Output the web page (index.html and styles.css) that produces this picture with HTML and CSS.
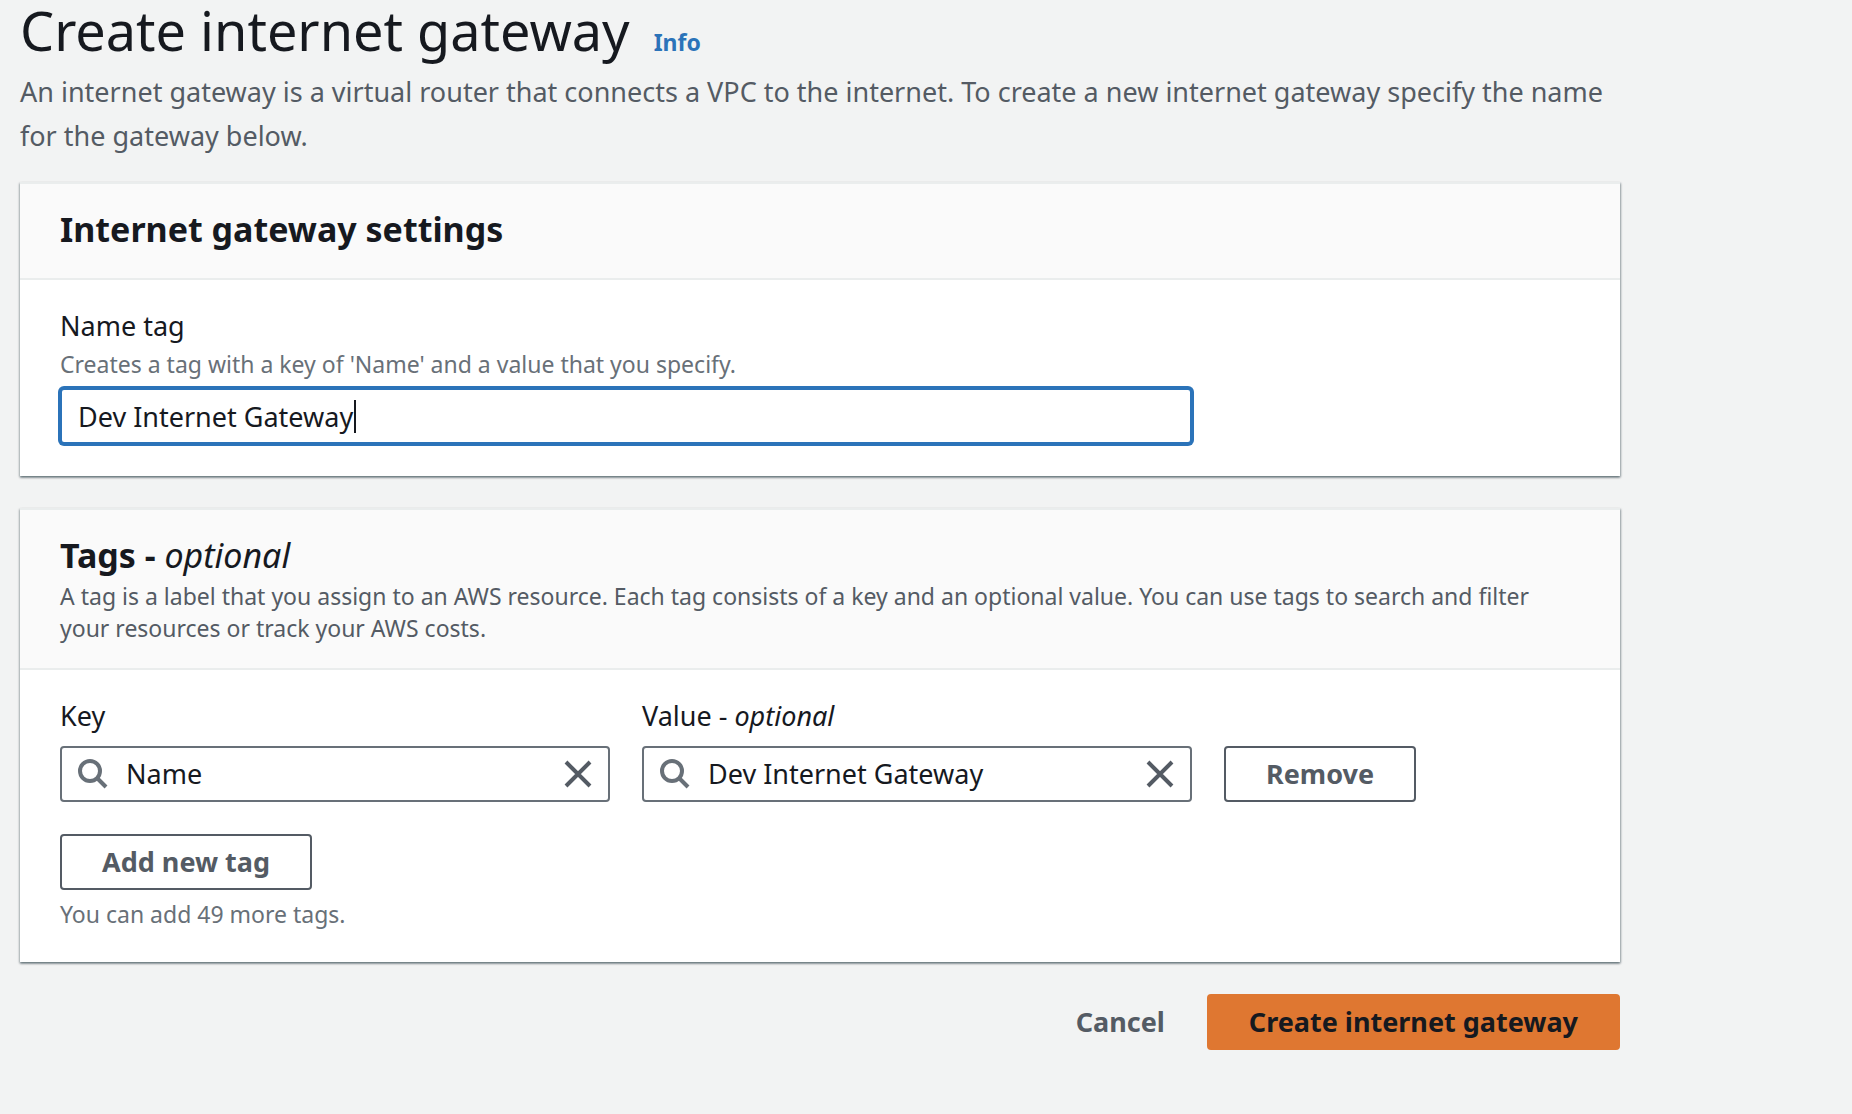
FILE: index.html
```html
<!DOCTYPE html>
<html lang="en">
<head>
<meta charset="utf-8">
<meta name="viewport" content="width=device-width, initial-scale=1">
<title>Create internet gateway</title>
<link rel="stylesheet" href="styles.css">
</head>
<body>
<svg class="sprite" aria-hidden="true">
  <symbol id="icon-search" viewBox="0 0 32 32">
    <circle cx="12" cy="13" r="10"/>
    <path d="M19 20 L28 29"/>
  </symbol>
  <symbol id="icon-close" viewBox="0 0 32 32">
    <path d="M4 4 L28 28 M28 4 L4 28"/>
  </symbol>
</svg>
<main class="page">
  <header class="page-header">
    <div class="title-row">
      <h1 class="title">Create internet gateway</h1>
      <a class="info-link" href="#info">Info</a>
    </div>
    <p class="intro">An internet gateway is a virtual router that connects a VPC to the internet. To create a new internet gateway specify the name for the gateway below.</p>
  </header>

  <form class="form">
    <section class="card">
      <div class="card-header">
        <h2 class="card-title">Internet gateway settings</h2>
      </div>
      <div class="card-body">
        <label class="label" for="name-tag">Name tag</label>
        <p class="hint" id="name-hint">Creates a tag with a key of 'Name' and a value that you specify.</p>
        <div class="input-wrap">
          <input class="input" id="name-tag" type="text" value="Dev Internet Gateway" aria-describedby="name-hint" autofocus>
          <span class="caret" aria-hidden="true"></span>
        </div>
      </div>
    </section>

    <section class="card">
      <div class="card-header">
        <h2 class="card-title">Tags - <em class="optional">optional</em></h2>
        <p class="card-description">A tag is a label that you assign to an AWS resource. Each tag consists of a key and an optional value. You can use tags to search and filter your resources or track your AWS costs.</p>
      </div>
      <div class="card-body">
        <div class="tag-row">
          <div class="field">
            <label class="label" for="tag-key">Key</label>
            <div class="search-box">
              <svg class="icon icon-search" aria-hidden="true"><use href="#icon-search"/></svg>
              <input class="search-input" id="tag-key" type="text" value="Name">
              <button class="clear" type="button" aria-label="Clear key"><svg class="icon icon-close"><use href="#icon-close"/></svg></button>
            </div>
          </div>
          <div class="field">
            <label class="label" for="tag-value">Value - <em class="optional">optional</em></label>
            <div class="search-box">
              <svg class="icon icon-search" aria-hidden="true"><use href="#icon-search"/></svg>
              <input class="search-input" id="tag-value" type="text" value="Dev Internet Gateway">
              <button class="clear" type="button" aria-label="Clear value"><svg class="icon icon-close"><use href="#icon-close"/></svg></button>
            </div>
          </div>
          <button class="button" type="button">Remove</button>
        </div>
        <button class="button button-add" type="button">Add new tag</button>
        <p class="hint">You can add 49 more tags.</p>
      </div>
    </section>

    <div class="actions">
      <button class="button button-link" type="button">Cancel</button>
      <button class="button button-primary" type="submit">Create internet gateway</button>
    </div>
  </form>
</main>
</body>
</html>
```
FILE: styles.css
```css
* {
  box-sizing: border-box;
}

body {
  margin: 0;
  background: #f2f3f3;
  color: #16191f;
  font-family: "Noto Sans", "Open Sans", sans-serif;
  font-size: 27px;
  font-weight: 430;
  line-height: 44px;
}

h1, h2, p {
  margin: 0;
}

input, button {
  font: inherit;
  color: inherit;
}

.sprite {
  display: none;
}

.page {
  max-width: 1640px;
  padding: 0 20px 64px;
}

.title-row {
  display: flex;
  align-items: baseline;
  gap: 24px;
}

.title {
  font-size: 54px;
  font-weight: 430;
  line-height: 60px;
}

.info-link {
  color: #2b73b9;
  font-size: 23px;
  font-weight: 700;
  line-height: 24px;
  text-decoration: none;
}

.intro {
  color: #545b64;
  padding: 10px 0 24px;
}

.form {
  display: flex;
  flex-direction: column;
  gap: 32px;
}

.card {
  background: #fff;
  border-top: 2px solid #eaeded;
  box-shadow: 0 2px 2px rgba(0, 28, 36, 0.3), 1px 1px 2px rgba(0, 28, 36, 0.3), -1px 1px 2px rgba(0, 28, 36, 0.2);
}

.card-header {
  padding: 20px 40px 24px;
  background: #fafafa;
  border-bottom: 2px solid #eaeded;
}

.card-title {
  font-size: 34px;
  font-weight: 700;
  line-height: 50px;
}

.optional {
  font-style: italic;
  font-weight: 430;
}

.card-description {
  color: #545b64;
  font-size: 23px;
  line-height: 32px;
}

.card-body {
  padding: 24px 40px 32px;
}

.label {
  display: block;
}

.hint {
  color: #687078;
  font-size: 23px;
  line-height: 32px;
}

.input,
.search-box {
  height: 56px;
  border: 2px solid #687078;
  border-radius: 4px;
  background: #fff;
}

.input-wrap {
  position: relative;
  max-width: 1132px;
  margin-top: 8px;
}

.input {
  display: block;
  width: 100%;
  padding: 0 16px;
  outline: none;
  caret-color: transparent;
}

.input:focus {
  border-color: #2b73b9;
  box-shadow: 0 0 0 2px #2b73b9;
}

.caret {
  position: absolute;
  top: 12px;
  left: 294px;
  width: 2px;
  height: 33px;
  background: #16191f;
}

.tag-row {
  display: grid;
  grid-template-columns: minmax(0, 550px) minmax(0, 550px) auto;
  justify-content: start;
  align-items: end;
  gap: 32px;
}

.field .label {
  margin-bottom: 8px;
}

.search-box {
  display: flex;
  align-items: center;
  padding: 0 14px 0 16px;
}

.search-input {
  flex: 1;
  min-width: 0;
  padding: 0 0 0 16px;
  border: 0;
  background: none;
  outline: none;
}

.icon {
  display: block;
  width: 32px;
  height: 32px;
  fill: none;
  stroke-width: 4;
}

.icon-search {
  stroke: #687078;
}

.icon-close {
  stroke: #545b64;
}

.clear {
  padding: 0;
  border: 0;
  background: none;
}

.button {
  height: 56px;
  padding: 0 40px;
  border: 2px solid #545b64;
  border-radius: 4px;
  background: #fff;
  color: #545b64;
  font-weight: 700;
  line-height: 44px;
}

.button-add {
  display: block;
  margin: 32px 0 8px;
}

.actions {
  display: flex;
  justify-content: flex-end;
}

.button-link {
  border-color: transparent;
  background: none;
}

.button-primary {
  border-color: #df7731;
  background: #df7731;
  color: #16191f;
}
```
